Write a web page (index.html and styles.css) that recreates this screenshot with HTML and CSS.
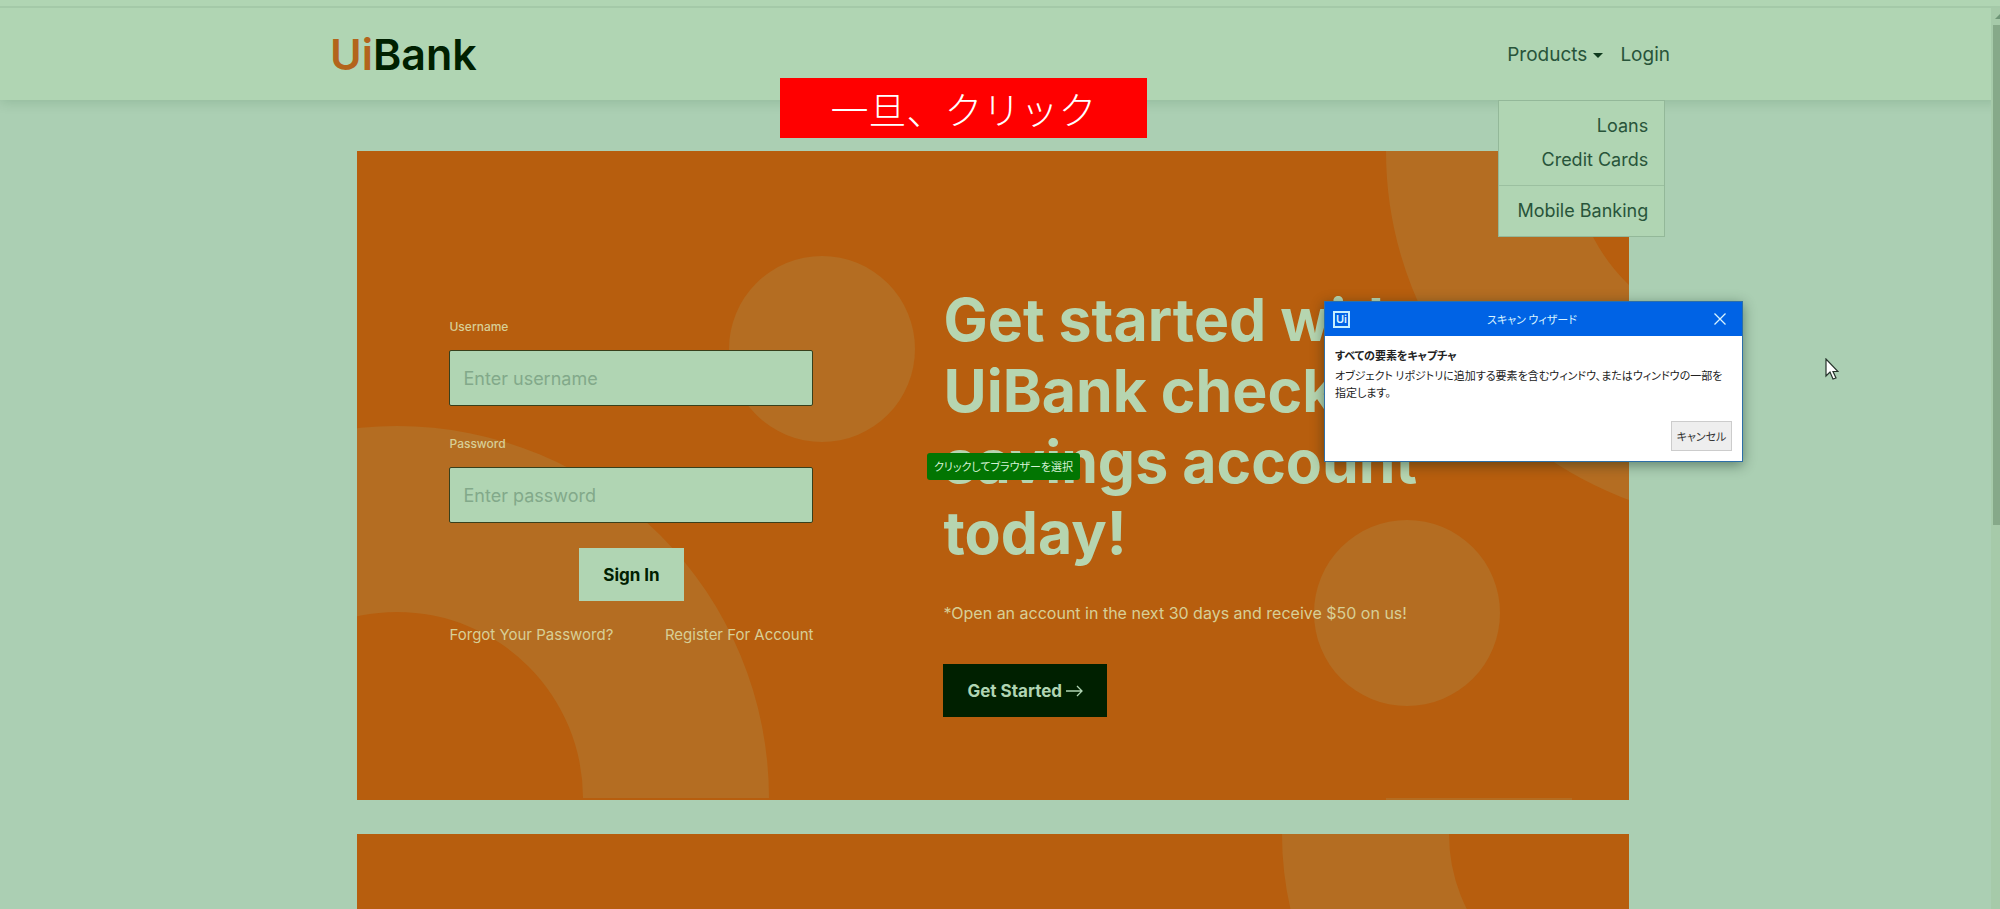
FILE: index.html
```
<!DOCTYPE html>
<html lang="en">
<head>
    <meta charset="UTF-8">
    <meta name="viewport" content="width=device-width, initial-scale=1.0">
    <title>UiBank</title>
    <link rel="stylesheet" href="styles.css">
</head>
<body>
    <header class="navbar">
        <div class="nav-container">
            <a href="#" class="logo"><span>Ui</span>Bank</a>
            <nav class="nav-links">
                <div class="dropdown">
                    <button type="button" class="nav-item">Products<span class="caret"></span></button>
                    <div class="dropdown-menu">
                        <a href="#">Loans</a>
                        <a href="#">Credit Cards</a>
                        <hr>
                        <a href="#">Mobile Banking</a>
                    </div>
                </div>
                <a href="#" class="nav-item">Login</a>
            </nav>
        </div>
    </header>

    <main>
        <section class="card">
            <svg class="pattern" viewBox="0 0 1272 649" preserveAspectRatio="xMinYMin slice" aria-hidden="true">
                <circle cx="465" cy="198" r="93" fill="#b46d22"/>
                <circle cx="1050" cy="462" r="93" fill="#b46d22"/>
                <path d="M-332 647a372 372 0 0 1 744 0h-186a186 186 0 0 0-372 0z" fill="#b46d22"/>
                <circle cx="1401" cy="0" r="279" fill="none" stroke="#b46d22" stroke-width="186"/>
                <path d="M1029 647h186v3h-186z" fill="#b46d22"/>
            </svg>
            <form class="login-form">
                <label for="username">Username</label>
                <input type="text" id="username" name="username" placeholder="Enter username">

                <label for="password">Password</label>
                <input type="password" id="password" name="password" placeholder="Enter password">

                <button type="submit" class="btn">Sign In</button>
                <div class="form-footer">
                    <a href="#">Forgot Your Password?</a>
                    <a href="#">Register For Account</a>
                </div>
            </form>
            <div class="hero">
                <h1>Get started with UiBank checking savings account today!</h1>
                <p>*Open an account in the next 30 days and receive $50 on us!</p>
                <button type="button" class="btn btn-dark">Get Started
                    <svg width="17" height="12" viewBox="0 0 17 12" fill="none" stroke="currentColor" stroke-width="1.3" aria-hidden="true"><path d="M0 6h16M11 1l5 5-5 5"/></svg>
                </button>
            </div>
        </section>

        <section class="card">
            <svg class="pattern" viewBox="0 0 1272 649" preserveAspectRatio="xMinYMin slice" aria-hidden="true">
                <circle cx="1259" cy="0" r="250.5" fill="none" stroke="#b46d22" stroke-width="167"/>
            </svg>
        </section>
    </main>

    <div class="scrollbar"><span class="scroll-arrow"></span><span class="thumb"></span></div>

    <!-- desktop overlays -->
    <div class="banner" lang="ja">一旦、クリック</div>
    <div class="tooltip" lang="ja">クリックしてブラウザーを選択</div>

    <div class="dialog" role="dialog" aria-labelledby="dialogTitle" lang="ja">
        <div class="dialog-title">
            <span class="dialog-logo">Ui</span>
            <span id="dialogTitle">スキャン ウィザード</span>
            <button type="button" class="dialog-close" aria-label="閉じる">
                <svg width="12" height="12" viewBox="0 0 12 12" stroke="currentColor" stroke-width="1.3"><path d="M.5.5l11 11M11.500.5l-11 11"/></svg>
            </button>
        </div>
        <div class="dialog-body">
            <strong>すべての要素をキャプチャ</strong>
            <p>オブジェクト リポジトリに追加する要素を含むウィンドウ、またはウィンドウの一部を<br>指定します。</p>
            <button type="button" class="dialog-cancel">キャンセル</button>
        </div>
    </div>

    <svg class="cursor" width="14" height="22" viewBox="0 0 14 22" aria-hidden="true"><path d="M1 1v17l4-4 3 7 3-1-3-6.500h5z" fill="#fff" stroke="#26332b" stroke-width="1.2"/></svg>
</body>
</html>
```
FILE: styles.css
```
* {
    box-sizing: border-box;
}
body {
    margin: 0;
    height: 100vh;
    position: relative;
    overflow: hidden;
    font-family: Inter, 'Open Sans', sans-serif;
    font-size: 16px;
    color: #002000;
    background-color: #abcfb3;
}
a {
    color: inherit;
    text-decoration: none;
}
button {
    font-family: inherit;
    cursor: pointer;
}

/* navbar */
.navbar {
    position: relative;
    z-index: 2;
    height: 100px;
    padding-top: 6px;
    background: linear-gradient(#a4c9a8, #a4c9a8) 0 6px / 100% 2px no-repeat #b0d5b3;
    box-shadow: 0 2px 12px rgba(0, 60, 20, 0.15);
}
.nav-container {
    display: flex;
    justify-content: space-between;
    align-items: center;
    width: 67%;
    height: 100%;
    margin: 0 auto;
}
.logo {
    padding-top: 2px;
    font-size: 43px;
    font-weight: 600;
}
.logo span {
    color: #b3641b;
}
.nav-links {
    display: flex;
    gap: 17px;
    padding-top: 4px;
}
.nav-item {
    display: flex;
    align-items: center;
    gap: 6px;
    padding: 0;
    border: none;
    background: none;
    font-size: 19px;
    line-height: 30px;
    color: #28543a;
}
.caret {
    border: 5px solid transparent;
    border-top-color: #0f3a1e;
    border-bottom: none;
}
.dropdown {
    position: relative;
}
.dropdown-menu {
    position: absolute;
    top: 60px;
    left: -9px;
    width: 167px;
    padding: 8px 0;
    border: 1px solid #93b899;
    background-color: #b0d5b3;
    text-align: right;
}
.dropdown-menu a {
    display: block;
    padding: 0 16px;
    font-size: 18px;
    line-height: 34px;
    color: #28543a;
}
.dropdown-menu hr {
    margin: 8px 0;
    border: none;
    border-top: 1px solid #9bc0a0;
}

/* cards */
main {
    padding: 51px 14px 0 0;
}
.card {
    position: relative;
    display: grid;
    grid-template-columns: 364px 1fr;
    column-gap: 130px;
    align-items: start;
    width: 64%;
    min-height: 649px;
    margin: 0 auto 34px;
    padding: 133px 92px 82px;
    overflow: hidden;
    background-color: #b75e0e;
    color: #d8cf96;
}
.pattern {
    position: absolute;
    top: 0;
    left: 0;
    width: 100%;
    height: 100%;
}
.login-form, .hero {
    position: relative;
}
.login-form {
    display: flex;
    flex-direction: column;
    padding-top: 34px;
}
label {
    margin-bottom: 14px;
    font-size: 12px;
    line-height: 18px;
    font-weight: 500;
}
input {
    height: 56px;
    margin-bottom: 29px;
    padding: 0 13px;
    border: 1px solid #38401c;
    border-radius: 2px;
    background-color: #b0d5b3;
    font-family: inherit;
    font-size: 18px;
}
input::placeholder {
    color: #82a98a;
}
.btn {
    height: 53px;
    padding: 0 24px;
    border: none;
    background-color: #b0d5b3;
    font-size: 17px;
    font-weight: 700;
    color: #002000;
}
.login-form .btn {
    align-self: center;
    margin-top: -4px;
}
.btn-dark {
    background-color: #002000;
    color: #b0d5b3;
}
.form-footer {
    display: flex;
    justify-content: space-between;
    margin-top: 23px;
    font-size: 15px;
    line-height: 22px;
    white-space: nowrap;
}
h1 {
    max-width: 520px;
    margin: 0;
    font-size: 59px;
    line-height: 71px;
    font-weight: 700;
    color: #b6d5b0;
}
.hero p {
    margin: 34px 0 40px;
    font-size: 16px;
    line-height: 22px;
}

/* browser scrollbar */
.scrollbar {
    position: absolute;
    z-index: 3;
    top: 8px;
    right: 0;
    bottom: 0;
    width: 9px;
    padding-left: 2px;
    overflow: hidden;
    background-color: #a6caa9;
}
.scroll-arrow {
    display: block;
    margin: 6px 0 6px 2px;
    width: 0;
    border: 5px solid transparent;
    border-top: none;
    border-bottom-color: #6f9677;
}
.thumb {
    display: block;
    height: 55.5%;
    background-color: #86a989;
}

/* overlays */
.banner {
    position: absolute;
    z-index: 4;
    top: 78px;
    left: 39%;
    width: 367px;
    background-color: #ff0000;
    color: #fff;
    font-family: 'Noto Sans CJK JP', sans-serif;
    font-size: 38px;
    font-weight: 300;
    line-height: 60px;
    text-align: center;
}
.tooltip {
    position: absolute;
    z-index: 4;
    top: 453px;
    left: 927px;
    padding: 0 7px;
    border-radius: 3px;
    background-color: #027502;
    color: #d5f2d5;
    font-family: 'Noto Sans CJK JP', sans-serif;
    font-feature-settings: "palt";
    font-size: 11px;
    line-height: 27px;
}
.dialog {
    position: absolute;
    z-index: 4;
    top: 301px;
    left: 1324px;
    width: 419px;
    border: 1px solid #2d6fa8;
    background-color: #fff;
    box-shadow: 0 3px 12px rgba(0, 30, 20, 0.45);
    color: #222;
    font-family: 'Noto Sans CJK JP', sans-serif;
    font-feature-settings: "palt";
    font-size: 11px;
    line-height: 17px;
}
.dialog-title {
    display: flex;
    justify-content: space-between;
    align-items: center;
    height: 34px;
    padding: 0 16px 0 8px;
    background-color: #0063e5;
    color: #d8f3ff;
}
.dialog-logo {
    width: 17px;
    height: 17px;
    border: 2px solid #c5efff;
    font-family: Inter, sans-serif;
    font-size: 11px;
    font-weight: 600;
    line-height: 13px;
    text-align: center;
}
.dialog-close {
    display: flex;
    padding: 0;
    border: none;
    background: none;
    color: #d8f3ff;
}
.dialog-body {
    padding: 11px 10px 10px;
}
.dialog-body strong {
    display: block;
    margin-bottom: 3px;
}
.dialog-body p {
    margin: 0 0 20px;
    white-space: nowrap;
}
.dialog-cancel {
    display: block;
    width: 61px;
    height: 30px;
    margin-left: auto;
    padding: 0;
    border: 1px solid #ccc;
    background-color: #eee;
    color: #333;
    font-feature-settings: "palt";
    font-size: 11px;
}
.cursor {
    position: absolute;
    z-index: 4;
    top: 358px;
    left: 1825px;
}
```
